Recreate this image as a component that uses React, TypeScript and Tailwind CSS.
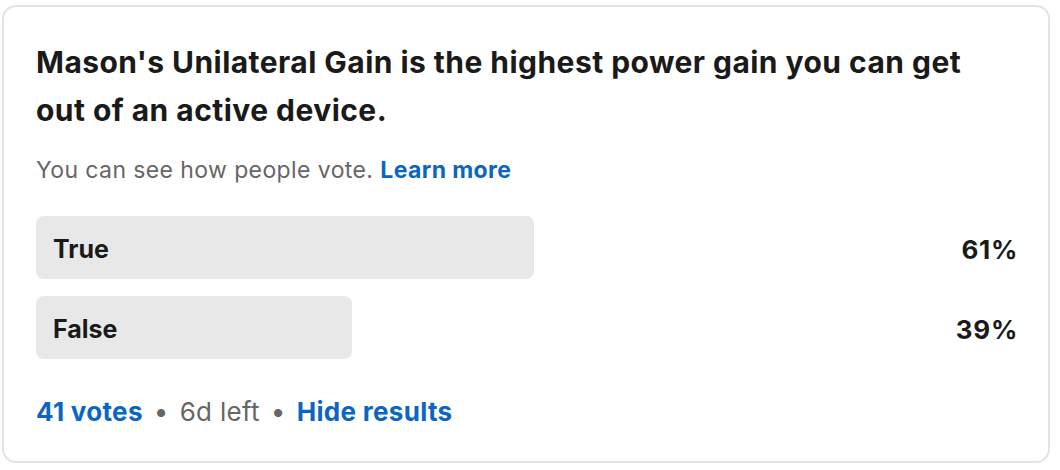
export default function App() {
  const options = [
    { label: "True", pct: 61, width: "w-[498px]" },
    { label: "False", pct: 39, width: "w-[316px]" },
  ];

  return (
    <div className="w-[1060px] h-[470px] bg-white pt-[5px] pl-[2px] font-['Inter',sans-serif]">
      <div className="w-[1048px] h-[458px] rounded-[14px] border-2 border-[#e4e4e4] pl-[32px] pr-[30px] pt-[31px]">
        {/* Question */}
        <h1 className="text-[30px] leading-[48px] font-bold text-[#1a1a1a] tracking-[0.45px]">
          Mason's Unilateral Gain is the highest power gain you can get
          <br />
          out of an active device.
        </h1>
        <p className="mt-[21px] text-[23px] leading-[30px] text-[#666666] tracking-[0.4px]">
          You can see how people vote.{" "}
          <span className="font-bold text-[#0a66c2]">Learn more</span>
        </p>

        {/* Results */}
        <div className="mt-[31px] flex flex-col gap-[17px]">
          {options.map((o) => (
            <div key={o.label} className="flex items-center justify-between">
              <div className={`${o.width} h-[63px] rounded-[8px] bg-[#e8e8e8] flex items-center pl-[17px] pt-[4px]`}>
                <span className="text-[25px] font-bold text-[#1a1a1a]">{o.label}</span>
              </div>
              <span className="pt-[4px] text-[26px] font-bold text-[#1a1a1a] tracking-[0.7px]">{o.pct}%</span>
            </div>
          ))}
        </div>

        {/* Footer */}
        <div className="mt-[37px] flex items-center text-[26px] leading-[32px] tracking-[0.3px]">
          <span className="font-bold text-[#0a66c2]">41 votes</span>
          <span className="mx-[11px] text-[#666666]">•</span>
          <span className="text-[#666666]">6d left</span>
          <span className="mx-[11px] text-[#666666]">•</span>
          <span className="font-bold text-[#0a66c2]">Hide results</span>
        </div>
      </div>
    </div>
  );
}
